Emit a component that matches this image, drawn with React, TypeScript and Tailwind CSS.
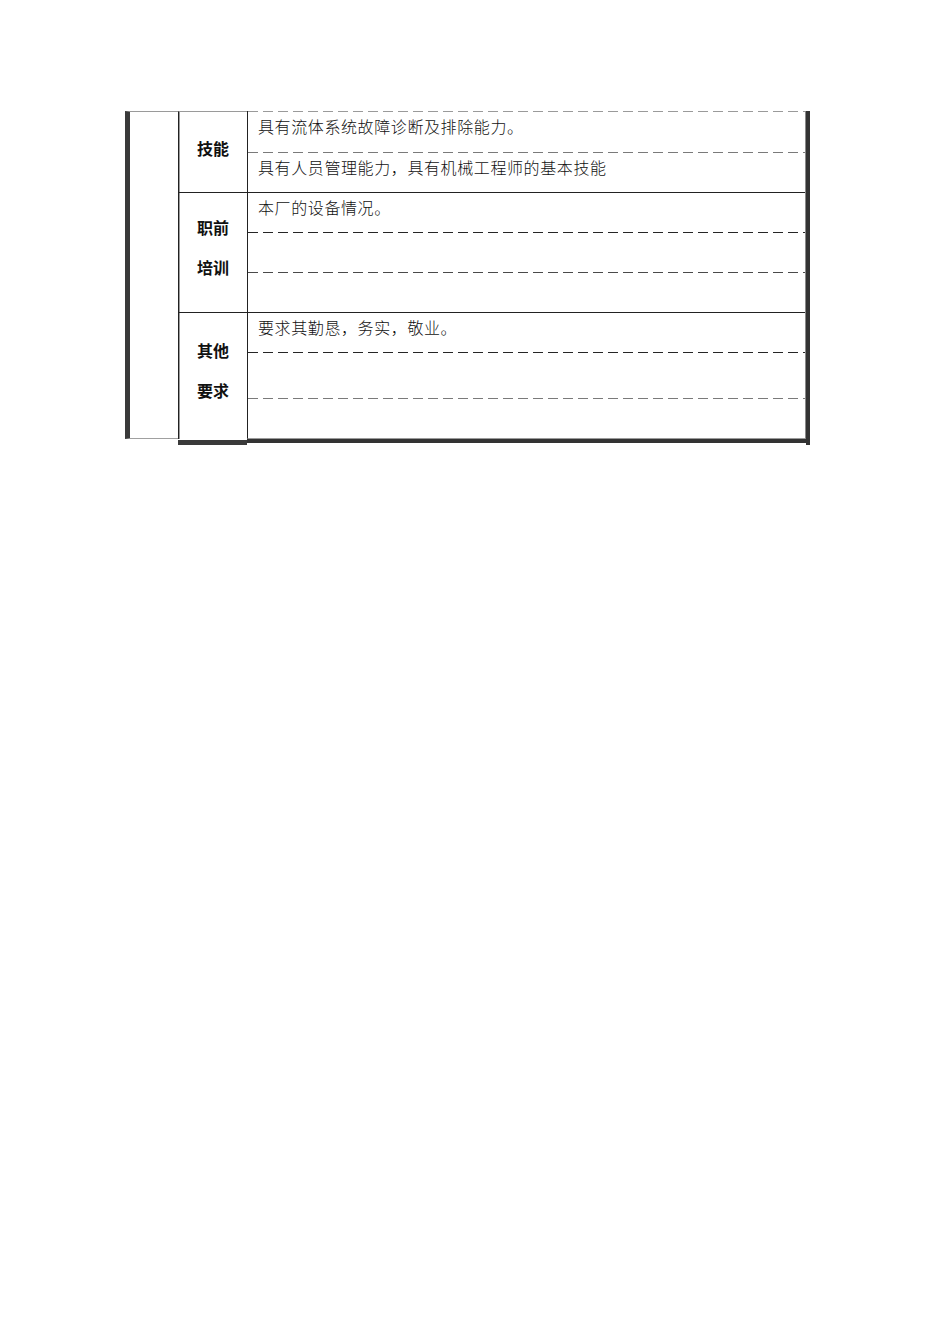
const SONG = "font-['Noto_Sans_CJK_SC',sans-serif]";

function Dash({ color }: { color: "gray" | "dark" | "mid" | "light" }) {
  const cls = {
    light: "bg-[repeating-linear-gradient(90deg,#9a9a9a_0_10px,transparent_10px_15px)]",
    gray: "bg-[repeating-linear-gradient(90deg,#7a7a7a_0_10px,transparent_10px_15px)]",
    mid: "bg-[repeating-linear-gradient(90deg,#4a4a4a_0_10px,transparent_10px_15px)]",
    dark: "bg-[repeating-linear-gradient(90deg,#262626_0_10px,transparent_10px_15px)]",
  }[color];
  return <div className={`h-px ${cls}`} />;
}

function Line({ h, text }: { h: string; text?: string }) {
  return (
    <div className={`${h} pl-[10px] pt-[5px] text-[16px] tracking-[0.6px] leading-[18px] text-[#111] font-light ${SONG}`}>
      {text}
    </div>
  );
}

function Label({ lines, pt }: { lines: string[]; pt: string }) {
  return (
    <div
      className={`w-[69px] shrink-0 border-l border-[#222] shadow-[inset_1px_0_0_#9a9a9a] ${pt} text-center text-[16px] leading-[40px] font-bold text-[#111] ${SONG}`}
    >
      {lines.map((l) => (
        <div key={l}>{l}</div>
      ))}
    </div>
  );
}

export default function App() {
  return (
    <div className="min-h-[1344px] w-[950px] bg-white pt-[111px] pl-[125px]">
      <div className="flex items-start">
        {/* outer blank column with heavy left rule */}
        <div className="w-[53px] h-[328px] shrink-0 border-l-[5px] border-l-[#3a3a3a] border-t border-t-[#9a9a9a] border-b border-b-[#a0a0a0]" />

        <div className="w-[632px] shrink-0 border-r-4 border-[#333]">
          <div className="border-r border-[#8a8a8a]">
            {/* 技能 */}
            <div className="flex h-[81px]">
              <Label lines={["技能"]} pt="pt-[16px] border-t border-t-[#9a9a9a]" />
              <div className="flex-1 border-l border-[#222]">
                <Dash color="light" />
                <Line h="h-[40px]" text="具有流体系统故障诊断及排除能力。" />
                <Dash color="gray" />
                <Line h="h-[39px]" text="具有人员管理能力，具有机械工程师的基本技能" />
              </div>
            </div>

            {/* 职前培训 */}
            <div className="flex h-[120px] border-t border-[#222]">
              <Label lines={["职前", "培训"]} pt="pt-[14px]" />
              <div className="flex-1 border-l border-[#222]">
                <Line h="h-[39px]" text="本厂的设备情况。" />
                <Dash color="dark" />
                <Line h="h-[39px]" />
                <Dash color="mid" />
                <Line h="h-[39px]" />
              </div>
            </div>

            {/* 其他要求 */}
            <div className="flex h-[127px] border-t border-[#222]">
              <Label lines={["其他", "要求"]} pt="pt-[17px]" />
              <div className="flex-1 border-l border-[#222] border-b border-b-[#9a9a9a]">
                <Line h="h-[39px]" text="要求其勤恳，务实，敬业。" />
                <Dash color="dark" />
                <Line h="h-[45px]" />
                <Dash color="gray" />
                <Line h="h-[39px]" />
              </div>
            </div>
          </div>

          {/* heavy bottom rule */}
          <div className="flex items-start">
            <div className="w-[69px] h-[5px] mt-[1px] bg-[#3a3a3a]" />
            <div className="flex-1 h-[4px] bg-[#333]" />
          </div>
        </div>
      </div>
    </div>
  );
}
